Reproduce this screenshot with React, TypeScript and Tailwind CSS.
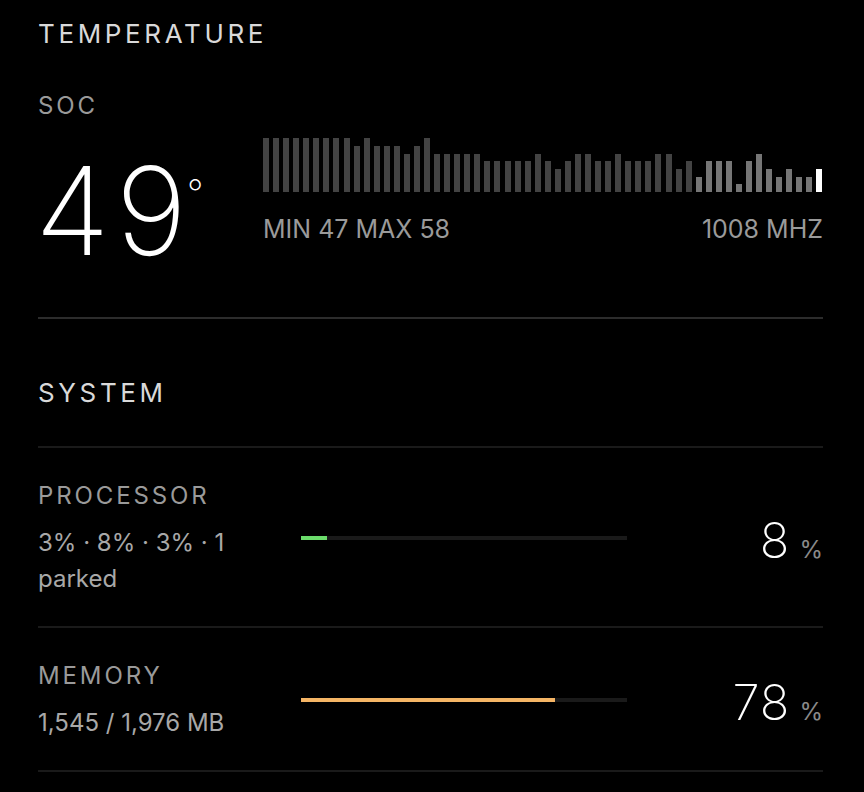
import React from "react";

// temperature history, levels 0 (hottest) .. 6
const LEVEL_HEIGHTS = [54, 46, 38, 31, 23, 15, 8];

const HISTORY: { level: number; tone: "old" | "recent" | "now" }[] = [
  ...[0, 0, 0, 0, 0, 0, 0, 0, 0, 1, 0, 1, 1, 1, 2, 1, 0, 2, 2, 2, 2, 2, 3, 3, 3, 3, 3, 2, 3, 4, 3, 2, 2, 3, 3, 2, 3, 3, 3, 2, 2, 4, 3].map(
    (level) => ({ level, tone: "old" as const })
  ),
  ...[5, 3, 3, 3, 6, 3, 2, 4, 5, 4, 5, 5].map((level) => ({ level, tone: "recent" as const })),
  { level: 4, tone: "now" },
];

const TONE_CLASS = {
  old: "bg-[#434343]",
  recent: "bg-[#767676]",
  now: "bg-white",
};

function TempChart() {
  return (
    <div className="flex h-[54px] items-end justify-between">
      {HISTORY.map((bar, i) => (
        <span
          key={i}
          className={`block w-[6px] ${TONE_CLASS[bar.tone]}`}
          style={{ height: LEVEL_HEIGHTS[bar.level] }}
        />
      ))}
    </div>
  );
}

interface StatRowProps {
  label: string;
  detail: string;
  percent: number;
  barColor: string;
}

function StatRow({ label, detail, percent, barColor }: StatRowProps) {
  return (
    <div className="flex items-center border-b-2 border-[#1a1a1a] pt-[36px] pb-[29px]">
      <div className="w-[263px] pr-6">
        <div className="text-[24px] leading-none tracking-[0.12em] text-[#9a9a9a]">{label}</div>
        <div className="mt-[17px] text-[24px] leading-[36px] text-[#a8a8a8]">{detail}</div>
      </div>
      <div className="mb-[6px] h-[4px] w-[326px] bg-[#1a1a1a]">
        <div className={`h-full ${barColor}`} style={{ width: `${percent}%` }} />
      </div>
      <div className="flex flex-1 items-baseline justify-end gap-[9px]">
        <span className="text-[49px] font-extralight leading-none tracking-[0.02em] text-white">{percent}</span>
        <span className="text-[24px] leading-none text-[#8a8a8a]">%</span>
      </div>
    </div>
  );
}

export default function App() {
  return (
    <div className="min-h-screen bg-black pl-[38px] pr-[41px] font-['Inter',sans-serif]">
      <section className="border-b-2 border-[#2c2c2c] pt-[21px] pb-[75px]">
        <h2 className="text-[26px] font-normal leading-none tracking-[0.14em] text-[#d9d9d9]">TEMPERATURE</h2>
        <div className="mt-[47px] text-[24px] leading-none tracking-[0.12em] text-[#9a9a9a]">SOC</div>
        <div className="mt-[20px] flex items-start">
          <div className="-ml-[3px] flex h-[103px] w-[228px] items-start pt-[12px]">
            <span className="text-[122px] font-extralight leading-none text-white">
              <span className="tracking-[0.05em]">4</span>9
            </span>
            <span className="mt-[25px] text-[36px] font-extralight leading-none text-white">°</span>
          </div>
          <div className="flex-1">
            <TempChart />
            <div className="mt-[25px] flex justify-between text-[25px] leading-none text-[#9a9a9a]">
              <span>MIN 47 MAX 58</span>
              <span>1008 MHZ</span>
            </div>
          </div>
        </div>
      </section>
      <section>
        <h2 className="border-b-2 border-[#1a1a1a] pt-[61px] pb-[40px] text-[26px] font-normal leading-none tracking-[0.14em] text-[#d9d9d9]">
          SYSTEM
        </h2>
        <StatRow label="PROCESSOR" detail="3% · 8% · 3% · 1 parked" percent={8} barColor="bg-[#6bdc6b]" />
        <StatRow label="MEMORY" detail="1,545 / 1,976 MB" percent={78} barColor="bg-[#f5b565]" />
      </section>
    </div>
  );
}
